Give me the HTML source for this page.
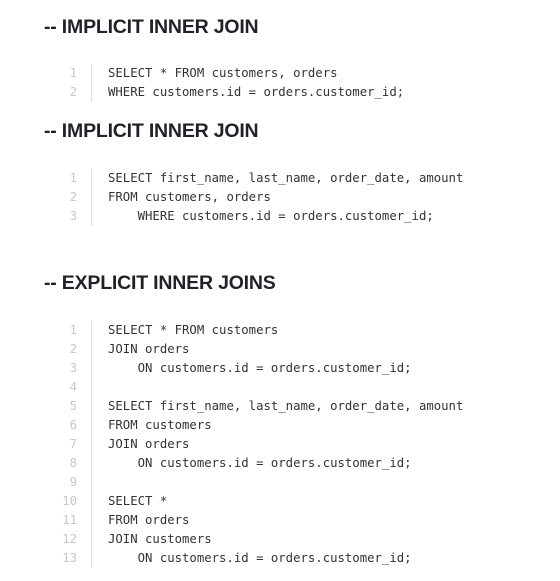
<!DOCTYPE html>
<html><head><style>
body{margin:0;width:560px;height:581px;background:#fff;position:relative;overflow:hidden}
h2{position:absolute;left:44px;margin:0;font:bold 19.5px/24px "Liberation Sans",sans-serif;color:#1f2229;letter-spacing:-0.2px}
.code{position:absolute;left:0;font:12.3px/19px "DejaVu Sans Mono",monospace;color:#333}
.ln{position:absolute;left:50px;width:27px;text-align:right;color:#c8c8c8}
.bar{position:absolute;left:91px;width:1px;background:#e2e2e2}
.tx{position:absolute;left:108px;white-space:pre}
</style></head><body>
<h2 style="top:15px">-- IMPLICIT INNER JOIN</h2>
<div class="code" style="top:64px">
<div class="bar" style="top:0;height:38px"></div>
<div class="ln" style="top:0">1<br>2</div>
<div class="tx" style="top:0">SELECT * FROM customers, orders
WHERE customers.id = orders.customer_id;</div>
</div>
<h2 style="top:119px">-- IMPLICIT INNER JOIN</h2>
<div class="code" style="top:169px">
<div class="bar" style="top:0;height:57px"></div>
<div class="ln">1<br>2<br>3</div>
<div class="tx">SELECT first_name, last_name, order_date, amount
FROM customers, orders
    WHERE customers.id = orders.customer_id;</div>
</div>
<h2 style="top:271px">-- EXPLICIT INNER JOINS</h2>
<div class="code" style="top:321px">
<div class="bar" style="top:0;height:247px"></div>
<div class="ln">1<br>2<br>3<br>4<br>5<br>6<br>7<br>8<br>9<br>10<br>11<br>12<br>13</div>
<div class="tx">SELECT * FROM customers
JOIN orders
    ON customers.id = orders.customer_id;

SELECT first_name, last_name, order_date, amount
FROM customers
JOIN orders
    ON customers.id = orders.customer_id;

SELECT *
FROM orders
JOIN customers
    ON customers.id = orders.customer_id;</div>
</div>
</body></html>
